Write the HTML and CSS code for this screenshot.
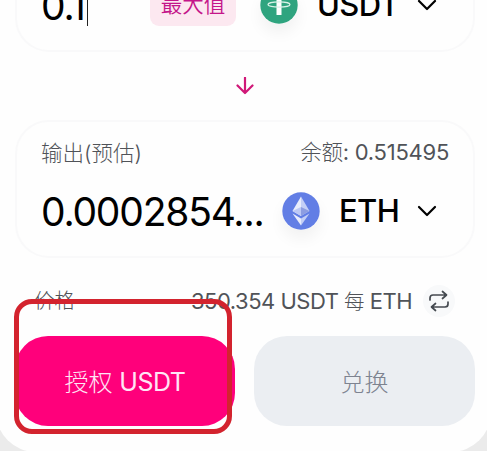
FILE: index.html
```html
<!DOCTYPE html>
<html lang="zh-CN">
<head>
<meta charset="utf-8">
<title>兑换</title>
<link rel="stylesheet" href="styles.css">
</head>
<body>
<main class="swap">
  <section class="panel">
    <div class="entry">
      <span class="amount"><span class="num">0.1</span><i class="caret"></i></span>
      <button class="max">最大值</button>
      <span class="coin"><svg viewBox="0 0 38 38"><circle cx="19" cy="19" r="18.7" fill="#2fa47f"/><path d="M9 8h20v5H21.500v16h-5V13H9z" fill="#fff"/><ellipse cx="19" cy="18.500" rx="11" ry="2.7" fill="none" stroke="#d8f2e8" stroke-width="1.2"/></svg></span>
      <span class="symbol usdt">USDT</span>
      <svg class="chevron" viewBox="0 0 20 12"><path d="M2 2l8 8 8-8"/></svg>
    </div>
  </section>
  <div class="direction"><svg viewBox="0 0 18 18"><path d="M9 .8v15M1.5 8.5L9 16l7.500-7.500"/></svg></div>
  <section class="panel">
    <div class="labels"><span class="zh">输出(预估)</span><span class="balance"><span class="zh">余额</span>: 0.515495</span></div>
    <div class="entry">
      <span class="amount"><span class="num">0.0002854...</span></span>
      <span class="coin"><svg viewBox="0 0 38 38"><circle cx="19" cy="19" r="18.700" fill="#627ee5"/><path d="M19 4.500l-8.500 14.500 8.500 5z" fill="#e9edfc"/><path d="M19 4.500l8.500 14.500-8.500 5z" fill="#c4cff6"/><path d="M19 15l-8.500 4 8.500 5z" fill="#bdc9f5"/><path d="M19 15l8.500 4-8.500 5z" fill="#8d9de1"/><path d="M10.500 21.500l8.500 5v7z" fill="#e9edfc"/><path d="M27.500 21.500l-8.500 5v7z" fill="#c4cff6"/></svg></span>
      <span class="symbol eth">ETH</span>
      <svg class="chevron" viewBox="0 0 20 12"><path d="M2 2l8 8 8-8"/></svg>
    </div>
  </section>
  <div class="price">
    <span class="zh">价格</span>
    <span class="rate">350.354 USDT <span class="zh">每</span> ETH</span>
    <span class="flip"><svg viewBox="0 0 22 22"><path d="M2 10V8q0-3 3-3h13M14.500 1.500L18.500 5l-4 3.500M20 12v2q0 3-3 3H4M7.500 13.500L3.500 17l4 3.500"/></svg></span>
  </div>
  <div class="actions">
    <div class="slot"><button class="action approve"><span class="zh">授权</span> <span class="token">USDT</span></button><div class="highlight"></div></div>
    <button class="action disabled"><span class="zh">兑换</span></button>
  </div>
</main>
</body>
</html>
```
FILE: styles.css
```css
* { box-sizing: border-box; }
body {
  margin: 0;
  height: 451px;
  overflow: hidden;
  background: #ebebeb;
  font-family: Inter, "Noto Sans CJK SC", sans-serif;
  color: #505358;
}
button { border: 0; padding: 0; font: inherit; }
.zh { font-weight: 300; }
.swap {
  margin: -86px -4px 0;
  height: 538px;
  padding: 0 16px 0 19px;
  background: #fefefe;
  border-radius: 0 0 40px 40px;
  display: flex;
  flex-direction: column;
}
.panel {
  height: 138px;
  flex: none;
  display: flex;
  flex-direction: column;
  justify-content: flex-end;
  border: 2px solid #f9f9fa;
  border-radius: 34px;
  padding: 0 24px 19px 24px;
}
.labels {
  display: flex;
  justify-content: space-between;
  height: 32px;
  margin-bottom: 16px;
  line-height: 32px;
  font-size: 21.500px;
}
.balance { font-size: 22px; line-height: 30px; letter-spacing: -.250px; }
.balance .zh { font-size: 21.500px; }
.entry {
  display: flex;
  align-items: center;
  height: 52px;
}
.amount {
  flex: 1;
  display: flex;
  align-items: center;
  color: #000;
  font-size: 39px;
  line-height: 46px;
}
.num { padding-top: 1px; font-weight: 430; letter-spacing: -1.200px; }
.caret { width: 1.500px; height: 42px; margin-left: 2px; background: #222; }
.max {
  width: 86px;
  height: 42px;
  margin-right: 24px;
  border-radius: 9px;
  background: #fce8f0;
  color: #c4168a;
  font-size: 21.500px;
  font-weight: 350;
  line-height: 40px;
  padding-bottom: 2px;
}
.coin {
  width: 38px;
  height: 38px;
  border-radius: 50%;
  box-shadow: 0 9px 15px rgba(0, 0, 0, .05);
}
.coin svg { display: block; width: 38px; height: 38px; }
.symbol {
  margin-left: 19px;
  color: #000;
  font-size: 31px;
  line-height: 40px;
  font-weight: 450;
  letter-spacing: -.600px;
}
.usdt { width: 82px; }
.eth { width: 60px; }
.chevron { width: 20px; height: 12px; margin: 0 12px 0 18px; }
svg path { stroke-linecap: round; stroke-linejoin: round; }
.chevron path { fill: none; stroke: #000; stroke-width: 2.200; }
.direction {
  height: 68px;
  flex: none;
  display: flex;
  justify-content: center;
  align-items: center;
}
.direction svg { width: 18px; height: 18px; }
.direction path { fill: none; stroke: #d01878; stroke-width: 2.200; }
.price {
  flex: none;
  padding: 18px 20px 0 19px;
  display: flex;
  align-items: center;
  height: 68px;
  font-size: 20.500px;
  line-height: 30px;
}
.rate { margin-left: auto; font-size: 22px; letter-spacing: -.500px; }
.rate .zh { font-size: 20.500px; }
.flip {
  display: flex;
  align-items: center;
  justify-content: center;
  width: 32px;
  height: 32px;
  margin-left: 11px;
  border-radius: 50%;
  background: #f8f9fa;
}
.flip svg { width: 22px; height: 22px; }
.flip path { fill: none; stroke: #454a50; stroke-width: 1.700; }
.actions {
  display: grid;
  grid-template-columns: 220px 221px;
  gap: 19px;
  margin-top: 10px;
}
.slot { position: relative; }
.action {
  display: block;
  width: 100%;
  height: 90px;
  border-radius: 33px;
  font-size: 24px;
  padding-bottom: 2px;
}
.token { font-size: 25px; letter-spacing: -.500px; }
.approve { background: #ff007b; color: #ffe5f5; }
.disabled { background: #ebeef2; color: #7d8390; }
.highlight {
  position: absolute;
  left: -1px;
  top: -37px;
  width: 218px;
  height: 135px;
  border: 5px solid #d3232e;
  border-radius: 18px;
}
```
